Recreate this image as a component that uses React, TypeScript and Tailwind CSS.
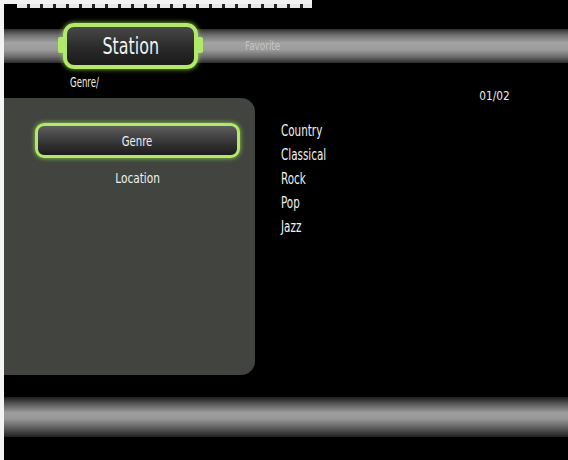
import React from "react";

const font = "font-['DejaVu_Sans_Condensed','DejaVu_Sans',sans-serif]";

export default function App() {
  return (
    <div className={`w-[568px] h-[460px] bg-black flex overflow-hidden ${font}`}>
      <div className="w-[4px] h-full bg-[#f4f4f4] shrink-0" />
      <div className="flex-1 flex flex-col">
        {/* top white band with dashed edge */}
        <div className="w-[308px] h-[4px] bg-[#f2f2f2]" />
        <div className="w-[308px] h-[4px] pl-[13px]">
          <div className="h-full bg-[repeating-linear-gradient(90deg,#e8e8e8_0px,#e8e8e8_10px,#222_10px,#222_13px)]" />
        </div>

        {/* top tube with tabs */}
        <div className="mt-[15px] h-[46px] flex items-center bg-[linear-gradient(to_bottom,transparent_0px,transparent_6px,#2e2e2e_6px,#6e6e6e_12px,#a4a4a4_20px,#9a9a9a_27px,#6a6a6a_34px,#2a2a2a_40px,transparent_40px)]">
          <div className="relative ml-[59px] w-[135px] h-[46px] rounded-[11px] border-[4px] border-[#b2e96a] bg-[linear-gradient(to_bottom,#484848,#2a2a2a_55%,#1a1a1a)] flex items-center justify-center shadow-[0_0_5px_#8fd04a]">
            <div className="absolute left-[-9px] top-[10px] w-[5px] h-[16px] rounded-l-[2px] bg-[#b2e96a]" />
            <div className="absolute right-[-9px] top-[10px] w-[5px] h-[16px] rounded-r-[2px] bg-[#b2e96a]" />
            <span className="inline-block text-[23px] leading-none text-[#f2f2f2] scale-x-[0.77] origin-center">Station</span>
          </div>
          <span className="ml-[47px] inline-block text-[12px] text-[#c4c4c4] scale-x-[0.82] origin-left">Favorite</span>
        </div>

        {/* breadcrumb + page */}
        <div className="mt-[4px] h-[25px] flex justify-between pl-[66px] pr-[58px]">
          <span className="self-start inline-block text-[14px] leading-[18px] text-[#eeeedd] scale-x-[0.68] origin-left">Genre/</span>
          <span className="self-end mb-[-6px] inline-block text-[13px] leading-[17px] text-[#eeeeee] scale-x-[0.9] origin-right">01/02</span>
        </div>

        {/* body */}
        <div className="flex h-[277px]">
          <div className="w-[251px] h-full bg-[#41443f] rounded-r-[14px] flex flex-col pl-[31px] pt-[25px]">
            <div className="w-[205px] h-[35px] rounded-[9px] border-[3px] border-[#b2e96a] bg-[linear-gradient(to_bottom,#5e5e5e,#3a3a3a_50%,#1c1c1c)] flex items-center justify-center shadow-[0_0_5px_#8fd04a]">
              <span className="inline-block text-[14px] leading-none text-[#f0f0f0] scale-x-[0.8] origin-center">Genre</span>
            </div>
            <div className="w-[205px] mt-[10px] text-center leading-[19px]">
              <span className="inline-block text-[14px] text-[#f0f0f0] scale-x-[0.84] origin-center">Location</span>
            </div>
          </div>
          <div className="flex flex-col items-start pl-[26px] pt-[21px] text-[15px] leading-[24px] text-[#f2f2f2]">
            <span className="inline-block scale-x-[0.77] origin-left">Country</span>
            <span className="inline-block scale-x-[0.77] origin-left">Classical</span>
            <span className="inline-block scale-x-[0.77] origin-left">Rock</span>
            <span className="inline-block scale-x-[0.77] origin-left">Pop</span>
            <span className="inline-block scale-x-[0.77] origin-left">Jazz</span>
          </div>
        </div>

        {/* bottom tube */}
        <div className="mt-[22px] h-[40px] bg-[linear-gradient(to_bottom,#1c1c1c,#5a5a5a_18%,#9e9e9e_40%,#969696_55%,#5c5c5c_78%,#202020)]" />
      </div>
    </div>
  );
}
